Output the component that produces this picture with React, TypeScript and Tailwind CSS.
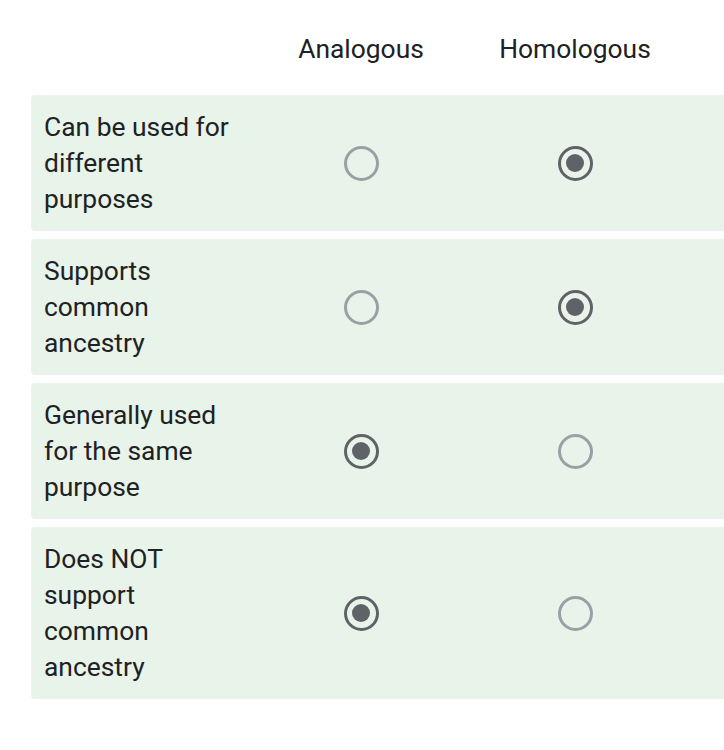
import React from 'react';

const columns = ['Analogous', 'Homologous'];

const rows = [
  { label: 'Can be used for different purposes', value: 1 },
  { label: 'Supports common ancestry', value: 1 },
  { label: 'Generally used for the same purpose', value: 0 },
  { label: 'Does NOT support common ancestry', value: 0 },
];

function Radio({ checked }: { checked: boolean }) {
  return (
    <div
      className={
        checked
          ? 'w-[35px] h-[35px] rounded-full border-[3.5px] border-[#5f6368] flex items-center justify-center'
          : 'w-[35px] h-[35px] rounded-full border-[3px] border-[#9aa0a6]'
      }
    >
      {checked && <div className="w-[18px] h-[18px] rounded-full bg-[#5f6368]" />}
    </div>
  );
}

export default function App() {
  return (
    <div
      className="w-[724px] h-[750px] overflow-hidden bg-white text-[#202124] text-[26.4px] leading-[36px]"
      style={{ fontFamily: 'Roboto, "Liberation Sans", sans-serif' }}
    >
      <div className="w-[760px] pl-[31px]">
        {/* Header */}
        <div className="flex pt-[31px] pb-[28px]">
          <div className="w-[223px] shrink-0" />
          {columns.map((c) => (
            <div key={c} className="w-[214px] shrink-0 text-center">
              {c}
            </div>
          ))}
        </div>

        {/* Rows */}
        <div className="flex flex-col gap-2">
          {rows.map((r) => (
            <div key={r.label} className="flex items-center bg-[#e8f3e9] rounded-[4px] py-[14px]">
              <div className="w-[223px] shrink-0 pl-[13px] pr-[22px]">{r.label}</div>
              {columns.map((c, i) => (
                <div key={c} className="w-[214px] shrink-0 flex justify-center">
                  <Radio checked={r.value === i} />
                </div>
              ))}
            </div>
          ))}
        </div>
      </div>
    </div>
  );
}
